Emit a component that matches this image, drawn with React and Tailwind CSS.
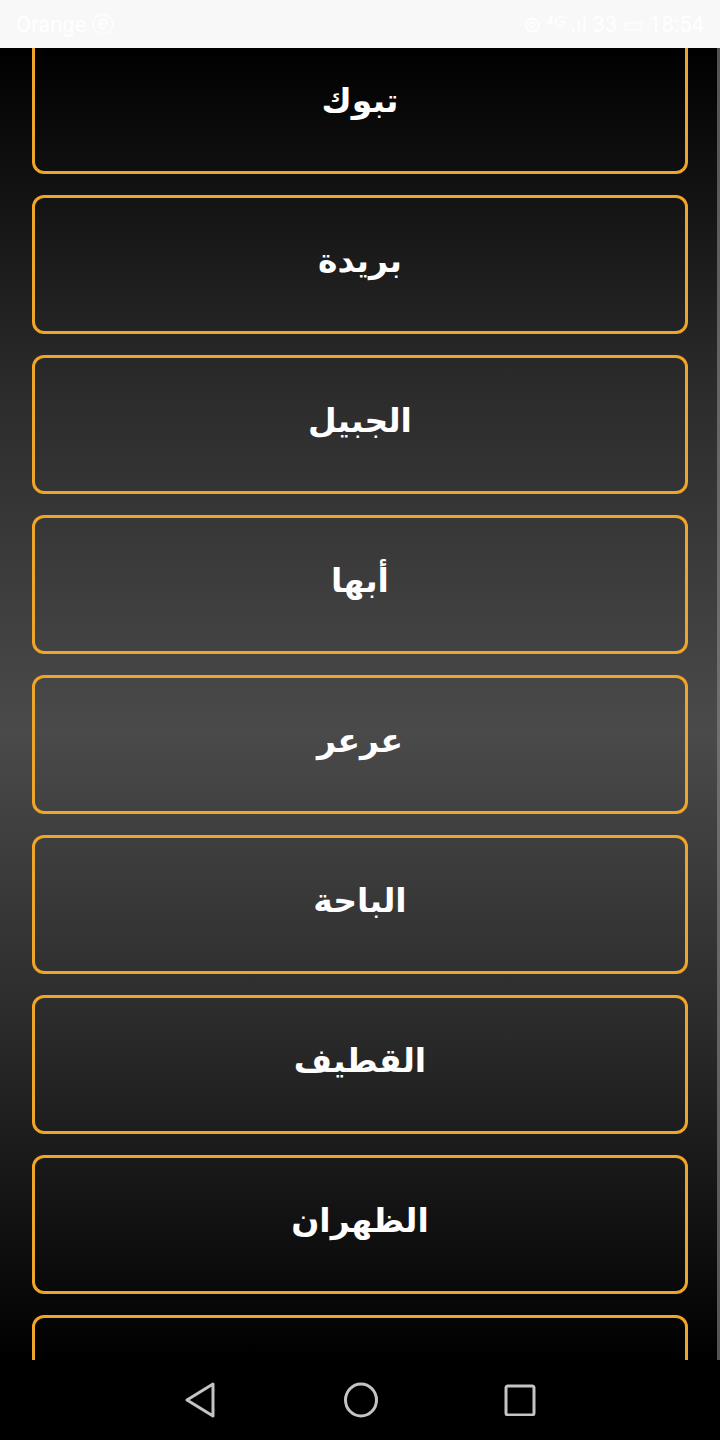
import React from 'react';

const cities = ['تبوك', 'بريدة', 'الجبيل', 'أبها', 'عرعر', 'الباحة', 'القطيف', 'الظهران', ''];

function CityCard({ name }) {
  return (
    <div className="h-[139px] shrink-0 rounded-[12px] border-[3px] border-[#eea52a] flex items-center justify-center">
      {name && (
        <span
          dir="rtl"
          className="text-white text-[33px] font-bold leading-none pb-2"
          style={{ fontFamily: '"DejaVu Sans", "Noto Sans", sans-serif' }}
        >
          {name}
        </span>
      )}
    </div>
  );
}

export default function App() {
  return (
    <div className="w-[720px] h-[1440px] flex flex-col overflow-hidden bg-black">
      {/* status bar */}
      <div
        className="h-12 bg-[#f8f8f8] flex items-center justify-between px-4 text-white text-[22px]"
        style={{ fontFamily: '"Roboto", sans-serif' }}
      >
        <span>Orange ⓔ</span>
        <span>⊚ ⁴ᴳ .ıl 33 ▭ 18:54</span>
      </div>

      {/* list */}
      <div className="h-[1312px] flex overflow-hidden bg-[linear-gradient(to_bottom,#000000_0%,#2a2a2a_25%,#4a4a4a_52%,#2a2a2a_75%,#000000_100%)]">
        <div className="flex-1 flex flex-col gap-[21px] pl-8 pr-[29px] -mt-[13px]">
          {cities.map((c, i) => (
            <CityCard key={i} name={c} />
          ))}
        </div>
        <div className="w-[3px] bg-[#8a8a8a]/60" />
      </div>

      {/* nav bar */}
      <div className="h-20 bg-black flex items-center justify-center gap-[125px]">
        <svg width="34" height="36" viewBox="0 0 34 36" fill="none">
          <path d="M29 2 L3 18 L29 34 Z" stroke="#c4c4c4" strokeWidth="3" strokeLinejoin="round" />
        </svg>
        <svg width="36" height="36" viewBox="0 0 36 36" fill="none">
          <ellipse cx="18" cy="18" rx="15.5" ry="16" stroke="#c4c4c4" strokeWidth="3" />
        </svg>
        <svg width="32" height="32" viewBox="0 0 32 32" fill="none">
          <rect x="2" y="2" width="28" height="29" rx="2" stroke="#c4c4c4" strokeWidth="3" />
        </svg>
      </div>
    </div>
  );
}
